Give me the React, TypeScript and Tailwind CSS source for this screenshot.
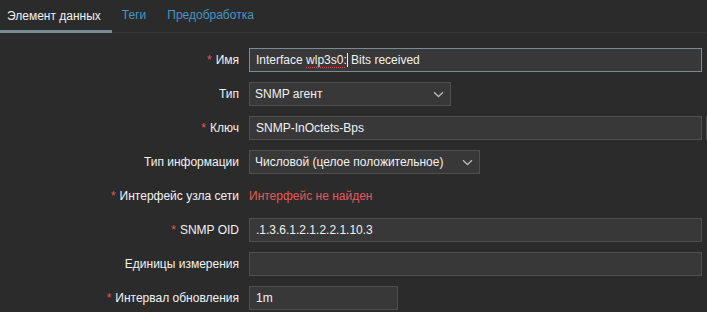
import type { ReactNode } from "react";

const font = { fontFamily: '"Liberation Sans", Arial, sans-serif' };

function Req() {
  return <span className="text-[#e45959] mr-[4px]">*</span>;
}

function Label({ required, children }: { required?: boolean; children: ReactNode }) {
  return (
    <div className="h-6 flex items-center justify-end text-[#f2f2f2] whitespace-nowrap">
      {required && <Req />}
      {children}
    </div>
  );
}

function TextBox({ value, width, focused }: { value?: ReactNode; width: string; focused?: boolean }) {
  return (
    <div
      className={`h-6 ${width} flex items-center px-[6px] bg-[#383838] border ${
        focused ? "border-[#768d99]" : "border-[#4f4f4f]"
      } text-[#f2f2f2] whitespace-nowrap overflow-hidden`}
    >
      <span>{value}</span>
    </div>
  );
}

function Select({ value, width }: { value: string; width: string }) {
  return (
    <div
      className={`h-6 ${width} flex items-center justify-between pl-[5px] pr-[6px] bg-[#383838] border border-[#4f4f4f] text-[#f2f2f2] whitespace-nowrap`}
    >
      <span>{value}</span>
      <svg width="11" height="7" viewBox="0 0 11 7" className="shrink-0">
        <path d="M1 1.2 L5.5 5.5 L10 1.2" fill="none" stroke="#b8b8b8" strokeWidth="1.3" />
      </svg>
    </div>
  );
}

export default function App() {
  return (
    <div className="w-[707px] h-[312px] bg-[#2b2b2b] overflow-hidden text-[12px]" style={font}>
      <div className="h-[33px] flex items-end border-b border-[#383838]">
        <div className="h-[33px] flex items-center pl-[7px] pr-[11px] border-b-[3px] border-[#768d99] text-[#f2f2f2] -mb-px pt-[2px]">
          Элемент данных
        </div>
        <div className="h-[33px] flex items-center ml-[10px] text-[#4796c4] pb-[1px]">Теги</div>
        <div className="h-[33px] flex items-center ml-[21px] text-[#4796c4] pb-[1px]">Предобработка</div>
      </div>

      <div className="grid grid-cols-[239px_1fr] gap-x-[10px] gap-y-[10px] pt-[15px]">
        <Label required>Имя</Label>
        <TextBox
          width="w-[453px]"
          focused
          value={
            <>
              Interface{" "}
              <span className="underline decoration-dotted decoration-[#e33] underline-offset-[3px]">wlp3s0:</span>
              <span className="inline-block w-px h-[14px] bg-[#f2f2f2] align-[-3px]" /> Bits received
            </>
          }
        />

        <Label>Тип</Label>
        <Select width="w-[202px]" value="SNMP агент" />

        <Label required>Ключ</Label>
        <div className="flex gap-[4px]">
          <TextBox width="w-[453px]" value="SNMP-InOctets-Bps" />
          <div className="h-6 w-[70px] shrink-0 border border-[#4f4f4f] bg-[#383838]" />
        </div>

        <Label>Тип информации</Label>
        <Select width="w-[231px]" value="Числовой (целое положительное)" />

        <Label required>Интерфейс узла сети</Label>
        <div className="h-6 flex items-center text-[#e45959]">Интерфейс не найден</div>

        <Label required>SNMP OID</Label>
        <TextBox width="w-[453px]" value=".1.3.6.1.2.1.2.2.1.10.3" />

        <Label>Единицы измерения</Label>
        <TextBox width="w-[453px]" />

        <Label required>Интервал обновления</Label>
        <TextBox width="w-[149px]" value="1m" />
      </div>
    </div>
  );
}
